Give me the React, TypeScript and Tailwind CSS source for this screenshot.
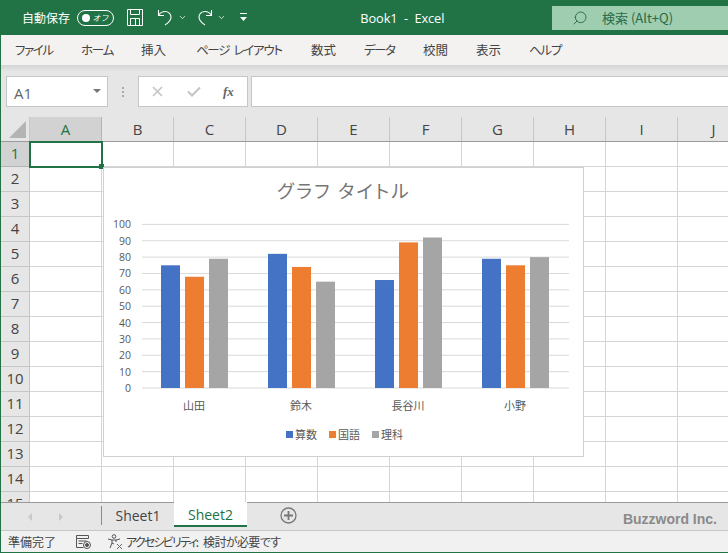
import { ChevronDown, Search } from "lucide-react";

const menus = [
  { label: "ファイル", cls: "w-[66px] tracking-[-1.4px]" },
  { label: "ホーム", cls: "w-[60px] tracking-[-1.2px]" },
  { label: "挿入", cls: "w-[55px]" },
  { label: "ページ レイアウト", cls: "w-[115px] tracking-[-1.3px] [word-spacing:3px]" },
  { label: "数式", cls: "w-[53px]" },
  { label: "データ", cls: "w-[59px] tracking-[-1.5px]" },
  { label: "校閲", cls: "w-[53px]" },
  { label: "表示", cls: "w-[53px]" },
  { label: "ヘルプ", cls: "w-[40px] tracking-[-1.2px]" },
];

const columns = ["A", "B", "C", "D", "E", "F", "G", "H", "I", "J"];
const rows = Array.from({ length: 15 }, (_, i) => i + 1);

const students = [
  { name: "山田", x: 161, values: [75, 68, 79] },
  { name: "鈴木", x: 268, values: [82, 74, 65] },
  { name: "長谷川", x: 375, values: [66, 89, 92] },
  { name: "小野", x: 482, values: [79, 75, 80] },
];
const series = [
  { name: "算数", color: "#4472c4" },
  { name: "国語", color: "#ed7d31" },
  { name: "理科", color: "#a5a5a5" },
];
const ticks = [0, 10, 20, 30, 40, 50, 60, 70, 80, 90, 100];
const jp = "'Noto Sans CJK JP', sans-serif";

function Chart() {
  // 座標はチャート左上(103,167)基準
  const base = 220;
  const unit = 1.636;
  return (
    <div className="absolute left-[102px] top-[50px] w-[481px] h-[290px] bg-white border border-[#d0d0d0]">
      <svg width="479" height="288" fontFamily={jp}>
        <text x="240" y="30" textAnchor="middle" fontSize="18.500" fill="#757575" letterSpacing="2.200" style={{ fontFeatureSettings: "'palt'" }}>
          グラフ タイトル
        </text>
        {ticks.map((t) => (
          <g key={t}>
            <line x1="38" x2="465" y1={base - t * unit} y2={base - t * unit} stroke="#d9d9d9" />
            <text x="27" y={base - t * unit + 4} textAnchor="end" fontSize="10.5" fill="#595959" fontFamily="'Open Sans', sans-serif">
              {t}
            </text>
          </g>
        ))}
        {students.map((s) => (
          <g key={s.name}>
            {s.values.map((v, i) => (
              <rect key={i} x={s.x - 104 + i * 24} y={base - v * unit} width="19" height={v * unit} fill={series[i].color} />
            ))}
            <text x={s.x - 104 + 33} y="241.500" textAnchor="middle" fontSize="11" fill="#595959">
              {s.name}
            </text>
          </g>
        ))}
        {series.map((s, i) => (
          <g key={s.name}>
            <rect x={182 + i * 43} y="263" width="7" height="7" fill={s.color} />
            <text x={191 + i * 43} y="271" fontSize="11" fill="#595959">
              {s.name}
            </text>
          </g>
        ))}
      </svg>
    </div>
  );
}

function TitleBar() {
  return (
    <div className="h-[35px] bg-[#217346] flex items-center text-white text-[12px] shrink-0">
      <span className="ml-[21px] w-[55px] whitespace-nowrap">自動保存</span>
      <div className="w-[38px] h-[16px] rounded-full border border-white flex items-center justify-between pl-[4px] pr-[5px]">
        <span className="w-[8px] h-[8px] rounded-full bg-white" />
        <span className="text-[8px] leading-none italic">オフ</span>
      </div>
      <svg className="ml-[13px] shrink-0" width="16" height="17" viewBox="0 0 16 17" fill="none" stroke="#fff">
        <path d="M.5.5h15v16H.5zM3.5.5v5h9v-5M3.5 16.500v-7h9v7M8.500 10v6" />
      </svg>
      <svg className="ml-[14px] shrink-0" width="16" height="17" viewBox="0 0 16 17" fill="none" stroke="#fff" strokeWidth="1.100">
        <path d="M1.500 1v5.500H7M1.800 6C3.500 3.500 5.500 2.500 8 2.500c3.500 0 6 2.500 6 5.500 0 3-2 5.500-6 8" />
      </svg>
      <ChevronDown className="ml-[5px]" size={9} strokeWidth={2} />
      <svg className="ml-[10px] shrink-0" width="16" height="17" viewBox="0 0 16 17" fill="none" stroke="#fff" strokeWidth="1.100">
        <path d="M14.500 1v5.500H9M14.200 6C12.500 3.500 10.500 2.500 8 2.500 4.500 2.500 2 5 2 8c0 3 2 5.500 6 8" />
      </svg>
      <ChevronDown className="ml-[4px]" size={9} strokeWidth={2} />
      <svg className="ml-[13px] shrink-0" width="9" height="9" viewBox="0 0 9 9" fill="#fff">
        <rect x="1" y="0" width="7" height="1" />
        <path d="M1 4h7L4.500 8z" />
      </svg>
      <span className="ml-[112px] mt-[3px] w-[193px] whitespace-pre text-[12.800px] font-['Open_Sans'] tracking-[-0.1px]">Book1  -  Excel</span>
      <div className="w-[176px] h-[24px] mt-[1px] bg-[#9fcdb0] flex items-center text-[#2a6a47] text-[13px] shrink-0">
        <Search className="ml-[20px] -scale-x-100" size={16} strokeWidth={1.4} />
        <span className="ml-[14px] whitespace-nowrap">検索 (Alt+Q)</span>
      </div>
    </div>
  );
}

function FormulaBar() {
  return (
    <div className="h-[52px] shrink-0 bg-gradient-to-b from-[#d4d4d4] from-0% to-[#e6e6e6] to-[12%] flex items-start pt-[11px] pl-[5px]">
      <div className="w-[102px] h-[31px] bg-white border border-[#c6c6c6] flex items-center justify-between pl-[7px] pr-[6px] text-[15px] text-[#666]">
        <span className="mt-[4px] font-['Open_Sans']">A1</span>
        <span className="w-0 h-0 border-x-[4px] border-x-transparent border-t-[4px] border-t-[#777] mb-[2px]" />
      </div>
      <div className="w-[30px] h-[31px] flex flex-col items-center justify-center gap-[2px]">
        <span className="w-[2px] h-[2px] bg-[#aaa]" />
        <span className="w-[2px] h-[2px] bg-[#aaa]" />
        <span className="w-[2px] h-[2px] bg-[#aaa]" />
      </div>
      <div className="w-[110px] h-[31px] bg-white border border-[#c6c6c6] flex items-center shrink-0">
        <svg className="ml-[13px]" width="11" height="11" viewBox="0 0 11 11" stroke="#c4c4c4" strokeWidth="1.600">
          <path d="M1 1l9 9M10 1l-9 9" />
        </svg>
        <svg className="ml-[24px]" width="14" height="11" viewBox="0 0 14 11" fill="none" stroke="#c4c4c4" strokeWidth="2">
          <path d="M1 5.500l4 4 8-8" />
        </svg>
        <span className="ml-[22px] font-['Liberation_Serif'] italic font-bold text-[13px] text-[#666]">fx</span>
      </div>
      <div className="ml-[3px] flex-1 h-[31px] bg-white border-y border-[#c6c6c6] border-l" />
    </div>
  );
}

function Sheet() {
  return (
    <div className="relative flex-1 min-h-0 overflow-hidden bg-white text-[15px] text-[#444] font-['Open_Sans']">
      <div className="flex h-[25px] bg-[#e6e6e6] border-b border-[#9a9a9a]">
        <div className="w-[29px] shrink-0 flex items-end justify-end pr-[3px] pb-[3px] border-r border-[#c6c6c6]">
          <span className="w-0 h-0 border-l-[17px] border-l-transparent border-b-[17px] border-b-[#b4b4b4]" />
        </div>
        {columns.map((c) => (
          <div
            key={c}
            className={
              c === "A"
                ? "w-[72px] shrink-0 flex items-center justify-center bg-[#d2d2d2] text-[#217346] border-r border-[#b4b4b4]"
                : "w-[72px] shrink-0 flex items-center justify-center border-r border-[#c6c6c6]"
            }
          >
            {c}
          </div>
        ))}
      </div>
      {rows.map((r) => (
        <div key={r} className="flex h-[25px]">
          <div
            className={
              r === 1
                ? "w-[29px] shrink-0 flex items-center justify-center pb-[2px] bg-[#d2d2d2] text-[#217346] border-r border-b border-[#b4b4b4]"
                : "w-[29px] shrink-0 flex items-center justify-center pb-[2px] bg-[#e6e6e6] border-r border-b border-[#c6c6c6]"
            }
          >
            {r}
          </div>
          {columns.map((c) => (
            <div key={c} className="w-[72px] shrink-0 border-r border-b border-[#d4d4d4]" />
          ))}
        </div>
      ))}
      {/* 選択セル */}
      <div className="absolute left-[28px] top-[24px] w-[74px] h-[27px] border-2 border-[#217346]">
        <span className="absolute -right-[3px] -bottom-[3px] w-[5px] h-[5px] bg-[#217346]" />
      </div>
      <Chart />
    </div>
  );
}

function TabBar() {
  return (
    <div className="h-[29px] shrink-0 bg-[#e6e6e6] border-t border-[#9a9a9a] border-b-[#c6c6c6] border-b flex items-start text-[14px] font-['Open_Sans'] text-[#444] relative">
      <span className="ml-[27px] mt-[10px] w-0 h-0 border-y-[4px] border-y-transparent border-r-[4px] border-r-[#c8c8c8]" />
      <span className="ml-[27px] mt-[10px] w-0 h-0 border-y-[4px] border-y-transparent border-l-[4px] border-l-[#c8c8c8]" />
      <div className="ml-[38px] mt-[3px] h-[19px] border-l border-[#8a8a8a]" />
      <div className="w-[72px] h-[24px] flex items-center justify-center">Sheet1</div>
      <div className="-mt-[1px] w-[73px] h-[25px] pt-[2px] bg-white border-b-2 border-[#217346] flex items-center justify-center text-[#217346]">Sheet2</div>
      <svg className="ml-[33px] mt-[4px]" width="17" height="17" viewBox="0 0 17 17" fill="none" stroke="#767676">
        <circle cx="8.500" cy="8.500" r="7.500" strokeWidth="1.300" />
        <path d="M8.500 4v9M4 8.500h9" strokeWidth="1.800" />
      </svg>
      <span className="ml-auto mr-[11px] mt-[6px] font-bold text-[14px] text-[#8a8a8a] font-['Liberation_Sans']">Buzzword Inc.</span>
    </div>
  );
}

function StatusBar() {
  return (
    <div className="h-[21px] shrink-0 bg-[#f1f1f1] flex items-center text-[12px] text-[#444]">
      <span className="ml-[7px] w-[68px] whitespace-nowrap">準備完了</span>
      <svg width="15" height="14" viewBox="0 0 15 14" fill="none" stroke="#555">
        <path d="M.5.500h12v3H.5zM.5 3.500v9h7M2.500 6h8M2.500 8.500h4" />
        <circle cx="11" cy="10" r="3.500" />
        <circle cx="11" cy="10" r="1.500" fill="#555" />
      </svg>
      <svg className="ml-[16px]" width="16" height="16" viewBox="0 0 16 16" fill="none" stroke="#555">
        <circle cx="7" cy="2.500" r="1.800" />
        <path d="M1 5l4 1h4l4-1M5 6v3l-2 5M9 6v2M5 9l2 1" />
        <path d="M10 10l5 5M15 10l-5 5" stroke="#666" />
      </svg>
      <span className="ml-[3px] w-[77px] whitespace-nowrap [font-feature-settings:'palt'] tracking-[-1.800px]">アクセシビリティ:</span>
      <span className="whitespace-nowrap [font-feature-settings:'palt'] tracking-[-0.600px]">検討が必要です</span>
    </div>
  );
}

export default function App() {
  return (
    <div className="w-[728px] h-[553px] overflow-hidden flex flex-col border-l border-b-[1.5px] border-[#217346] font-['Noto_Sans_CJK_JP',sans-serif] bg-white">
      <TitleBar />
      <div className="h-[30px] shrink-0 bg-[#f3f2f1] flex items-center pl-[14px] text-[12.500px] text-[#444] [font-feature-settings:'palt']">
        {menus.map((m) => (
          <span key={m.label} className={`${m.cls} whitespace-nowrap`}>
            {m.label}
          </span>
        ))}
      </div>
      <FormulaBar />
      <Sheet />
      <TabBar />
      <StatusBar />
    </div>
  );
}
